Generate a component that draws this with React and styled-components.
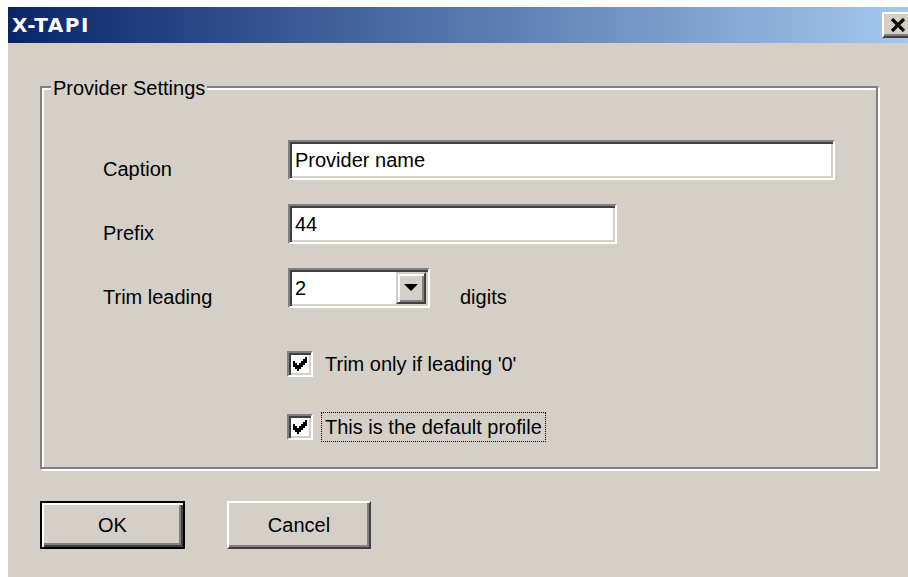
import React from "react";
import styled, { createGlobalStyle } from "styled-components";

const GlobalStyle = createGlobalStyle`
  html, body {
    margin: 0;
    padding: 0;
    background: #ffffff;
    overflow: hidden;
  }
`;

const Page = styled.div`
  box-sizing: border-box;
  width: 100vw;
  height: 100vh;
  padding: 7px 0 0 8px;
  overflow: hidden;
  background: #ffffff;
  font-family: "Liberation Sans", Arial, sans-serif;
  font-size: 20px;
  color: #000;
`;

const Window = styled.div`
  width: 912px;
  height: 100%;
  background: #d4d0c8;
`;

const TitleBar = styled.div`
  height: 36px;
  display: flex;
  align-items: center;
  justify-content: space-between;
  padding: 0 6px 0 4px;
  background: linear-gradient(to right, #0a246a, #a6caf0);
`;

const Title = styled.span`
  font-family: "DejaVu Sans", Verdana, sans-serif;
  font-weight: bold;
  font-size: 20px;
  letter-spacing: 1.5px;
  color: #ffffff;
`;

const CloseButton = styled.div`
  box-sizing: border-box;
  width: 32px;
  height: 26px;
  display: flex;
  align-items: center;
  justify-content: center;
  background: #d4d0c8;
  border: 2px solid;
  border-color: #ffffff #404040 #404040 #ffffff;
  box-shadow: inset -2px -2px 0 #808080;
`;

const Content = styled.div`
  padding: 43px 0 0 32px;
`;

const Group = styled.div`
  box-sizing: border-box;
  width: 838px;
  height: 383px;
  border: 2px solid #808080;
  box-shadow: inset 2px 2px 0 #ffffff, 2px 2px 0 #ffffff;
`;

const Legend = styled.div`
  width: fit-content;
  margin: -12px 0 0 9px;
  padding: 0 2px;
  line-height: 24px;
  background: #d4d0c8;
`;

const Form = styled.div`
  display: grid;
  grid-template-columns: 185px 1fr;
  row-gap: 23px;
  padding: 40px 0 0 61px;
`;

const Label = styled.div`
  line-height: 24px;
  margin-top: 17px;
`;

const TextInput = styled.input`
  box-sizing: border-box;
  width: ${(p) => p.$width}px;
  height: 40px;
  margin: 0;
  padding: 0 0 0 5px;
  font-family: "Liberation Sans", Arial, sans-serif;
  font-size: 20px;
  color: #000;
  background: #ffffff;
  border: 2px solid;
  border-color: #808080 #ffffff #ffffff #808080;
  box-shadow: inset 2px 2px 0 #404040, inset -2px -2px 0 #d4d0c8;
  outline: none;
`;

const ComboRow = styled.div`
  display: flex;
  align-items: flex-start;
`;

const Combo = styled.div`
  box-sizing: border-box;
  width: 142px;
  height: 40px;
  display: flex;
  padding: 2px;
  background: #ffffff;
  border: 2px solid;
  border-color: #808080 #ffffff #ffffff #808080;
  box-shadow: inset 2px 2px 0 #404040, inset -2px -2px 0 #d4d0c8;
`;

const ComboValue = styled.div`
  flex: 1;
  padding-left: 3px;
  line-height: 32px;
`;

const ComboButton = styled.div`
  box-sizing: border-box;
  width: 30px;
  height: 32px;
  display: flex;
  align-items: center;
  justify-content: center;
  background: #d4d0c8;
  border: 2px solid;
  border-color: #d4d0c8 #404040 #404040 #d4d0c8;
  box-shadow: inset 2px 2px 0 #ffffff, inset -2px -2px 0 #808080;
`;

const Unit = styled.div`
  margin: 17px 0 0 30px;
  line-height: 24px;
`;

const Checks = styled.div`
  display: flex;
  flex-direction: column;
  gap: 33px;
  margin: 40px 0 0 245px;
`;

const CheckRow = styled.div`
  display: flex;
  align-items: center;
  height: 30px;
`;

const Box = styled.div`
  box-sizing: border-box;
  width: 26px;
  height: 26px;
  display: flex;
  align-items: center;
  justify-content: center;
  background: #ffffff;
  border: 2px solid;
  border-color: #808080 #ffffff #ffffff #808080;
  box-shadow: inset 2px 2px 0 #404040, inset -2px -2px 0 #d4d0c8;
`;

const CheckLabel = styled.div`
  margin-left: 8px;
  padding: 0 3px;
  line-height: 28px;
  border: 1px dotted ${(p) => (p.$focused ? "#000" : "transparent")};
`;

const Buttons = styled.div`
  display: flex;
  gap: 42px;
  margin-top: 32px;
`;

const Button = styled.div`
  box-sizing: border-box;
  width: ${(p) => p.$width}px;
  height: 48px;
  display: flex;
  align-items: center;
  justify-content: center;
  background: #d4d0c8;
  border: 2px solid;
  border-color: ${(p) =>
    p.$default ? "#000" : "#ffffff #404040 #404040 #ffffff"};
  box-shadow: ${(p) =>
    p.$default
      ? "inset 2px 2px 0 #ffffff, inset -2px -2px 0 #404040, inset -4px -4px 0 #808080"
      : "inset -2px -2px 0 #808080"};
`;

const CloseGlyph = () => (
  <svg width="16" height="14" viewBox="0 0 16 14">
    <path d="M2 1 L14 13 M14 1 L2 13" stroke="#000" strokeWidth="3.2" />
  </svg>
);

const ArrowDown = () => (
  <svg width="14" height="8" viewBox="0 0 14 8">
    <path d="M0 0 H14 L7 7 Z" fill="#000" />
  </svg>
);

// classic 7x7 tick, drawn pixel by pixel
const Tick = () => (
  <svg width="14" height="14" viewBox="0 0 7 7" shapeRendering="crispEdges">
    <path
      d="M6 0h1v1h-1z M5 1h2v1h-2z M0 2h1v1h-1z M4 2h3v1h-3z M0 3h2v1h-2z M3 3h3v1h-3z M0 4h5v1h-5z M1 5h3v1h-3z M2 6h1v1h-1z"
      fill="#000"
    />
  </svg>
);

const Checkbox = ({ label, focused }) => (
  <CheckRow>
    <Box>
      <Tick />
    </Box>
    <CheckLabel $focused={focused}>{label}</CheckLabel>
  </CheckRow>
);

const App = () => {
  return (
    <>
      <GlobalStyle />
      <Page>
        <Window>
          <TitleBar>
            <Title>X-TAPI</Title>
            <CloseButton>
              <CloseGlyph />
            </CloseButton>
          </TitleBar>
          <Content>
            <Group>
              <Legend>Provider Settings</Legend>
              <Form>
                <Label>Caption</Label>
                <TextInput $width={547} defaultValue="Provider name" />
                <Label>Prefix</Label>
                <TextInput $width={329} defaultValue="44" />
                <Label>Trim leading</Label>
                <ComboRow>
                  <Combo>
                    <ComboValue>2</ComboValue>
                    <ComboButton>
                      <ArrowDown />
                    </ComboButton>
                  </Combo>
                  <Unit>digits</Unit>
                </ComboRow>
              </Form>
              <Checks>
                <Checkbox label="Trim only if leading '0'" />
                <Checkbox label="This is the default profile" focused />
              </Checks>
            </Group>
            <Buttons>
              <Button $default $width={145}>OK</Button>
              <Button $width={144}>Cancel</Button>
            </Buttons>
          </Content>
        </Window>
      </Page>
    </>
  );
};

export default App;
